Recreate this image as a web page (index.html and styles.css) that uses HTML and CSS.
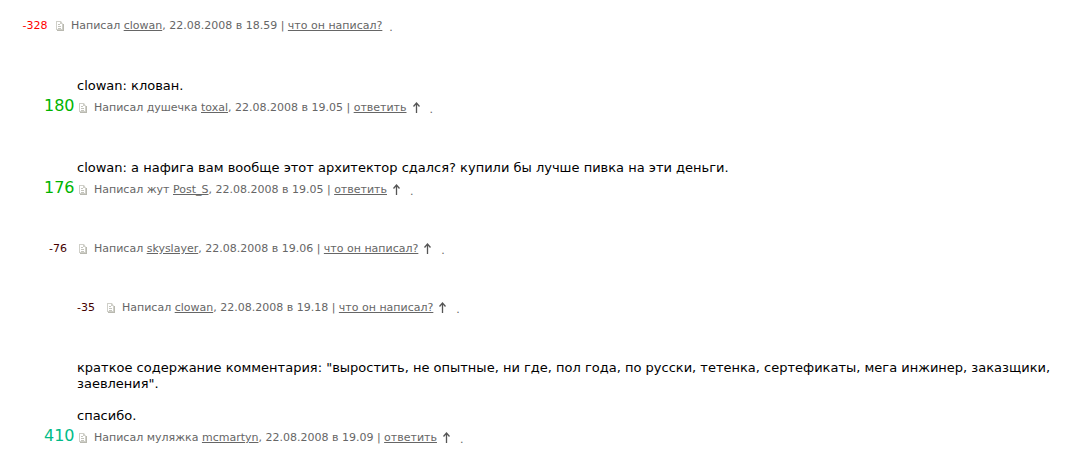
FILE: index.html
```
<!DOCTYPE html>
<html lang="ru">
<head>
  <meta charset="UTF-8">
  <title>Комментарии</title>
  <link rel="stylesheet" href="styles.css">
</head>
<body>

  <svg class="sprite" width="0" height="0">
    <symbol id="page" viewBox="0 0 8 10">
      <path d="M1 9h6V3h1v7H1z" fill="#b9b9b0"/>
      <path d="M0 0h5l2 3v6H0z" fill="#cfcfc8"/>
      <path d="M1 1h3v2h2v5H1z" fill="#fff"/>
      <path d="M2 3h2v1H2zM2 5h3v1H2zM2 7h3v1H2z" fill="#c4c4bc"/>
    </symbol>
    <symbol id="up" viewBox="0 0 7 11">
      <path d="M3.500 11V1M.5 4.500l3-3.500 3 3.500" fill="none" stroke="#555" stroke-width="1.300"/>
    </symbol>
  </svg>

  <div class="comment root">
    <div class="meta">
      <span class="score bad">-328</span>
      <svg class="page"><use href="#page"/></svg>
      <span>Написал <a href="#">clowan</a>, 22.08.2008 в 18.59 | <a href="#">что он написал?</a></span>
      <span class="dot">.</span>
    </div>
  </div>

  <div class="comment">
    <div class="text">clowan: клован.</div>
    <div class="meta">
      <span class="score good">180</span>
      <svg class="page"><use href="#page"/></svg>
      <span>Написал душечка <a href="#">toxal</a>, 22.08.2008 в 19.05 | <a href="#">ответить</a></span>
      <a class="up" href="#" aria-label="Вверх"><svg><use href="#up"/></svg></a>
      <span class="dot">.</span>
    </div>
  </div>

  <div class="comment">
    <div class="text">clowan: а нафига вам вообще этот архитектор сдался? купили бы лучше пивка на эти деньги.</div>
    <div class="meta">
      <span class="score good">176</span>
      <svg class="page"><use href="#page"/></svg>
      <span>Написал жут <a href="#">Post_S</a>, 22.08.2008 в 19.05 | <a href="#">ответить</a></span>
      <a class="up" href="#" aria-label="Вверх"><svg><use href="#up"/></svg></a>
      <span class="dot">.</span>
    </div>
  </div>

  <div class="comment">
    <div class="meta">
      <span class="score low">-76</span>
      <svg class="page"><use href="#page"/></svg>
      <span>Написал <a href="#">skyslayer</a>, 22.08.2008 в 19.06 | <a href="#">что он написал?</a></span>
      <a class="up" href="#" aria-label="Вверх"><svg><use href="#up"/></svg></a>
      <span class="dot">.</span>
    </div>
  </div>

  <div class="comment nested">
    <div class="meta">
      <span class="score low">-35</span>
      <svg class="page"><use href="#page"/></svg>
      <span>Написал <a href="#">clowan</a>, 22.08.2008 в 19.18 | <a href="#">что он написал?</a></span>
      <a class="up" href="#" aria-label="Вверх"><svg><use href="#up"/></svg></a>
      <span class="dot">.</span>
    </div>
  </div>

  <div class="comment">
    <div class="text">краткое содержание комментария: "выростить, не опытные, ни где, пол года, по русски, тетенка, сертефикаты, мега инжинер, заказщики, заевления".<br><br>спасибо.</div>
    <div class="meta">
      <span class="score best">410</span>
      <svg class="page"><use href="#page"/></svg>
      <span>Написал муляжка <a href="#">mcmartyn</a>, 22.08.2008 в 19.09 | <a href="#">ответить</a></span>
      <a class="up" href="#" aria-label="Вверх"><svg><use href="#up"/></svg></a>
      <span class="dot">.</span>
    </div>
  </div>

</body>
</html>
```
FILE: styles.css
```
body {
  margin: 0;
  padding: 14px 20px 0 0;
  background-color: #fff;
  color: #000;
  font-family: Verdana, "DejaVu Sans", sans-serif;
  font-size: 13px;
  line-height: 16px;
}

.sprite {
  display: block;
}

.comment {
  margin: 37px 0 0 44px;
}

.comment.root {
  margin: 0 0 0 21px;
}

.comment.nested {
  margin-left: 72px;
}

.text {
  padding: 5px 0 2px 33px;
}

.meta {
  display: flex;
  align-items: center;
  height: 20px;
  padding-top: 2px;
  font-size: 11px;
  color: #666;
}

.meta a {
  color: #666;
}

.score {
  width: 28px;
  padding-right: 2px;
  text-align: center;
}

.bad {
  color: #f00;
}

.low {
  color: #400;
}

.good,
.best {
  width: 30px;
  padding: 0 0 4px;
  font-size: 16px;
}

.good {
  color: #00b400;
}

.best {
  color: #00bb88;
}

.page {
  width: 8px;
  height: 10px;
  margin: 0 7px 0 5px;
}

.up {
  display: flex;
  margin: 0 0 1px 6px;
}

.up svg {
  width: 7px;
  height: 11px;
}

.dot {
  margin: 4px 0 0 10px;
}

.root .dot {
  margin-left: 7px;
}
```
